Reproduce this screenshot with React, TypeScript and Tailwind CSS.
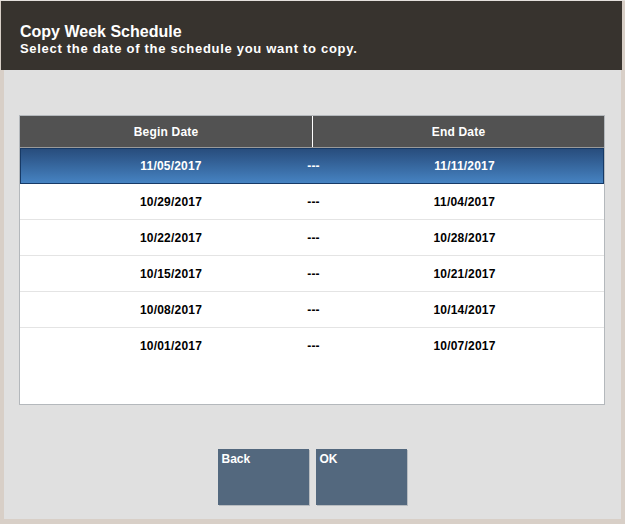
import React, { useState } from 'react';

const weeks = [
    { begin: '11/05/2017', end: '11/11/2017' },
    { begin: '10/29/2017', end: '11/04/2017' },
    { begin: '10/22/2017', end: '10/28/2017' },
    { begin: '10/15/2017', end: '10/21/2017' },
    { begin: '10/08/2017', end: '10/14/2017' },
    { begin: '10/01/2017', end: '10/07/2017' },
];

const App: React.FC = () => {
    const [selected, setSelected] = useState(0);

    return (
        <div
            className="w-[625px] h-[524px] bg-[#d8cfc7] flex flex-col border-t border-[#e4e0dc]"
            style={{ fontFamily: '"Liberation Sans", Arial, sans-serif' }}
        >
            {/* Title bar */}
            <div className="h-[69px] ml-[1px] mr-[3px] bg-[#37332e] pl-[19px] pt-[21px] text-white font-bold">
                <div className="text-[16px] leading-[19px]">Copy Week Schedule</div>
                <div className="text-[13px] leading-[15px] tracking-[0.7px]">Select the date of the schedule you want to copy.</div>
            </div>

            {/* Body */}
            <div className="flex-1 mx-[4px] mb-[5px] bg-[#e0e0e0] flex flex-col items-stretch pt-[45px] pl-[15px] pr-[16px]">
                <div className="h-[290px] bg-white border border-[#b4b8bc] flex flex-col">
                    <div className="h-[32px] bg-[#525252] border-b border-[#9a9a9a] flex text-white text-[12px] font-bold tracking-[0.2px]">
                        <div className="w-[293px] border-r border-white flex items-center justify-center">Begin Date</div>
                        <div className="flex-1 flex items-center justify-center">End Date</div>
                    </div>
                    {weeks.map((w, i) => (
                        <div
                            key={w.begin}
                            onClick={() => setSelected(i)}
                            className={`h-[36px] grid grid-cols-[262px_23px_279px] items-center text-[12px] font-bold tracking-[0.2px] cursor-pointer ${
                                i === selected
                                    ? 'pl-[19px] bg-gradient-to-b from-[#284d7d] to-[#4683c2] border border-[#173a66] text-white'
                                    : i < weeks.length - 1
                                    ? 'pl-[20px] border-b border-[#e4e4e4] text-black'
                                    : 'pl-[20px] text-black'
                            }`}
                        >
                            <span className="text-center">{w.begin}</span>
                            <span className="text-center">---</span>
                            <span className="text-center">{w.end}</span>
                        </div>
                    ))}
                </div>

                <div className="flex justify-center gap-[7px] mt-[44px]">
                    <button className="w-[91px] h-[56px] bg-[#53687e] text-white text-[12px] font-bold text-left flex items-start px-[4px] pt-[1px] shadow-[1px_1px_0_#b8bcc0]">
                        Back
                    </button>
                    <button className="w-[91px] h-[56px] bg-[#53687e] text-white text-[12px] font-bold text-left flex items-start px-[4px] pt-[1px] shadow-[1px_1px_0_#b8bcc0]">
                        OK
                    </button>
                </div>
            </div>
        </div>
    );
};

export default App;
